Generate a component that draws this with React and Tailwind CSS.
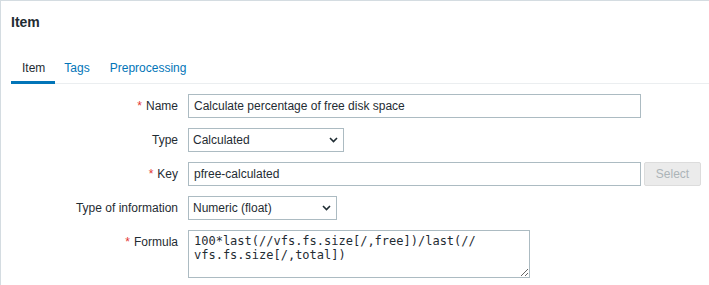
import React from 'react'

const labelCls = 'h-[24px] flex items-center justify-end text-right whitespace-nowrap'

const Chevron = () => (
  <svg width="9" height="6" viewBox="0 0 9 6" className="absolute right-[6px] top-[9px] pointer-events-none">
    <polyline points="1,1 4.5,4.5 8,1" fill="none" stroke="#1f2c33" strokeWidth="1.6" />
  </svg>
)

const Label = ({ required, children }) => (
  <div className={labelCls}>
    {required && <span className="text-[#e33734] mr-[4px]">*</span>}
    <span>{children}</span>
  </div>
)

const FakeSelect = ({ value, width }) => (
  <div className={`relative h-[24px] ${width}`}>
    <div className="h-full w-full border border-[#acbbc2] bg-white pl-[4px] pr-[20px] flex items-center">
      {value}
    </div>
    <Chevron />
  </div>
)

export default function App() {
  return (
    <div className="w-[709px] h-[285px] overflow-hidden bg-white border-t border-l border-[#d4dce1] pt-[12px] font-[Liberation_Sans,Arial,sans-serif] text-[12px] text-[#1f2c33]">
      <h1 className="h-[18px] leading-[18px] text-[14px] font-bold pl-[10px]">Item</h1>

      {/* tabs */}
      <ul className="mt-[20px] ml-[10px] flex border-b border-[#ebeef0] leading-[18px]">
        <li className="pl-[11px] pr-[10px] pt-[8px] pb-[4px] border-b-[3px] border-[#0275b8] -mb-px">Item</li>
        <li className="pl-[9px] pr-[10px] pt-[8px] pb-[4px] border-b-[3px] border-transparent -mb-px text-[#0275b8]">Tags</li>
        <li className="pl-[10px] pr-[10px] pt-[8px] pb-[4px] border-b-[3px] border-transparent -mb-px text-[#0275b8]">Preprocessing</li>
      </ul>

      {/* form */}
      <div className="mt-[10px] grid grid-cols-[177px_1fr] gap-x-[10px] gap-y-[10px] items-start">
        <Label required>Name</Label>
        <div>
          <input
            className="h-[24px] w-[453px] border border-[#acbbc2] px-[5px] outline-none"
            defaultValue="Calculate percentage of free disk space"
          />
        </div>

        <Label>Type</Label>
        <FakeSelect value="Calculated" width="w-[156px]" />

        <Label required>Key</Label>
        <div className="flex">
          <input
            className="h-[24px] w-[453px] border border-[#acbbc2] px-[5px] outline-none"
            defaultValue="pfree-calculated"
          />
          <button
            type="button"
            disabled
            className="ml-[3px] h-[24px] w-[57px] bg-[#ebebeb] border border-[#dcdcdc] text-[#acb4b8] rounded-[2px]"
          >
            Select
          </button>
        </div>

        <Label>Type of information</Label>
        <FakeSelect value="Numeric (float)" width="w-[149px]" />

        <Label required>Formula</Label>
        <div>
          <textarea
            className="block h-[48px] w-[342px] border border-[#acbbc2] px-[5px] pt-[3px] font-['DejaVu_Sans_Mono',monospace] text-[12px] leading-[14px] outline-none"
            defaultValue={'100*last(//vfs.fs.size[/,free])/last(//\nvfs.fs.size[/,total])'}
          />
        </div>
      </div>
    </div>
  )
}
